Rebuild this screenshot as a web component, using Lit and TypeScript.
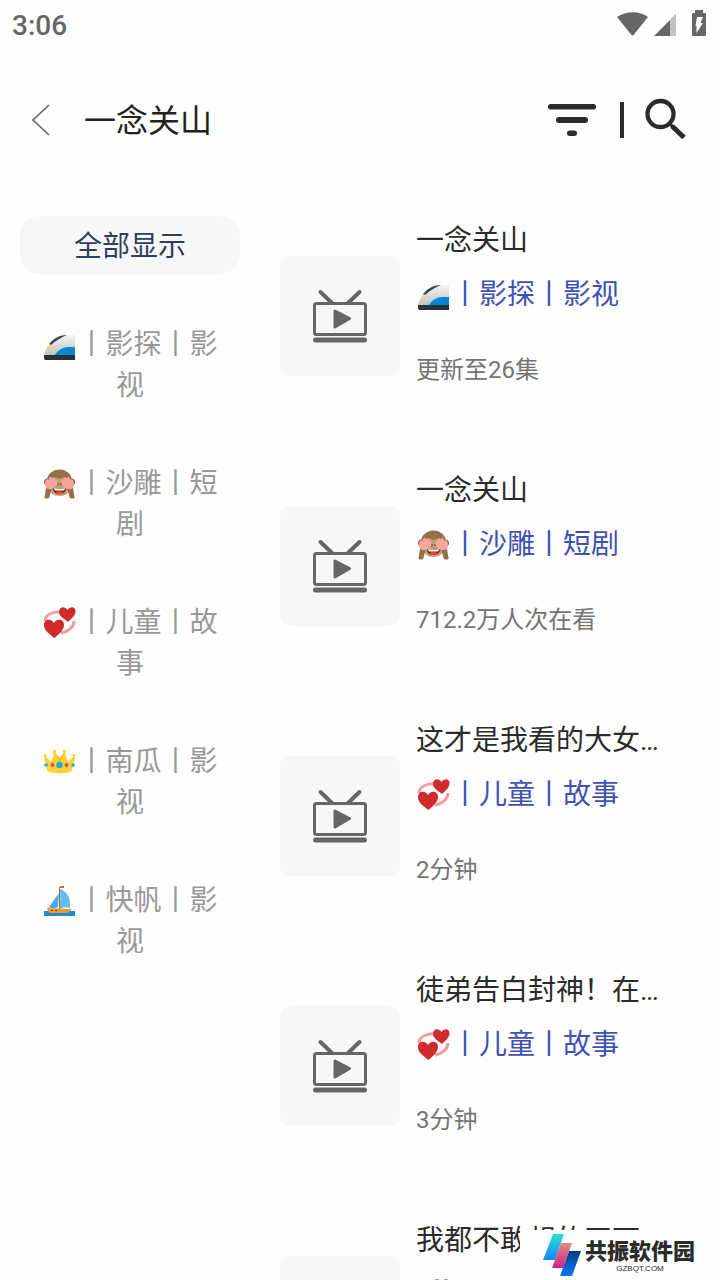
import { LitElement, html, css, svg } from "lit";
import { customElement, state } from "lit/decorators.js";

type Emoji = "train" | "monkey" | "hearts" | "crown" | "boat";

const art = {
  train: svg`
    <defs><linearGradient id="tb" x1="0" y1="0" x2="0" y2="1"><stop offset="0" stop-color="#f4f4f4"/><stop offset="1" stop-color="#bdbdbd"/></linearGradient></defs>
    <g transform="translate(0 2)">
    <path d="M1 26 C1 18 10 4 25 4 H32 V26 Z" fill="url(#tb)"/>
    <path d="M6 13 C11 7 17 4 24 4 C17 7 12 10 8 14 Z" fill="#37474f"/>
    <path d="M4 17 L8 13 L7 16 L4 19 Z" fill="#fdd835"/>
    <path d="M11 25 C15 19 20 16 26 16 H32 V25 Z" fill="#0288d1"/>
    <path d="M1 24 H32 V29 H2 Q1 28 1 27 Z" fill="#263238"/></g>`,
  monkey: svg`
    <circle cx="4.500" cy="14" r="3.500" fill="#8d6542"/><circle cx="28.500" cy="14" r="3.500" fill="#8d6542"/>
    <ellipse cx="16.500" cy="13" rx="12.500" ry="11.500" fill="#94704a"/>
    <path d="M6 18 C6 11 12 7 16.500 11 C21 7 27 11 27 18 C27 25 22 28 16.500 28 C11 28 6 25 6 18 Z" fill="#c69a6d"/>
    <path d="M10 20 Q16.500 22 23 20 C23 28 10 28 10 20 Z" fill="#4e2e24"/><path d="M10.500 20 Q16.500 22 22.500 20 L21 22.500 H12 Z" fill="#fff"/><ellipse cx="16.500" cy="24.500" rx="3.500" ry="1.400" fill="#f44336"/>
    <path d="M14.500 15.500 h1.300 v1.300 h-1.300z M17.200 15.500 h1.300 v1.300 h-1.300z" fill="#5d4037"/>
    <path d="M1.500 29 L3.500 17 L9 19 L6.500 29 C5.500 31 1 31 1.500 29 Z M31.500 29 L29.500 17 L24 19 L26.500 29 C27.500 31 32 31 31.500 29 Z" fill="#94704a"/>
    <path d="M2.500 19 C1 12 4 10 6 12 C6 8 9 8 9 11 C10 8 13 9 12 12 C15 11 15 14 13.500 17 C12 21 5 23 2.500 19 Z" fill="#f8a5a0"/>
    <path d="M30.500 19 C32 12 29 10 27 12 C27 8 24 8 24 11 C23 8 20 9 21 12 C18 11 18 14 19.500 17 C21 21 28 23 30.500 19 Z" fill="#f8a5a0"/>`,
  hearts: svg`
    <path d="M2 14 C2 8 9 5 17 4.500" fill="none" stroke="#f29a9d" stroke-width="3"/>
    <path d="M31 14 C31 20 25 25 18 26" fill="none" stroke="#f29a9d" stroke-width="3"/>
    <path d="M25 15 C20 11 16 9 16 5 C16 -1 22 -1 24.500 3 C27 -1 33 -1 32.500 5 C32 9 28 12 25 15 Z" fill="#d02a2c"/>
    <path d="M11.500 31 C5 26 1 23 1 18 C1 12 8 11 11 16 C14 11 21 12 21 18 C21 23 16 27 11.500 31 Z" fill="#d02a2c"/>`,
  crown: svg`
    <path d="M5 25 L1 11 L8 16 L12 7 L16.500 12 L21 7 L25 16 L32 11 L28 25 Z" fill="#f0a81c"/>
    <path d="M4 25 L2 10 L9 17 L11 5 L16.500 15 L22 5 L24 17 L31 10 L29 25 C22 28 11 28 4 25 Z" fill="#fdd32f"/>
    <circle cx="11.500" cy="5.500" r="1.700" fill="#fdd32f"/><circle cx="21.500" cy="5.500" r="1.700" fill="#fdd32f"/><circle cx="2" cy="9.500" r="1.400" fill="#fdd32f"/><circle cx="31" cy="9.500" r="1.400" fill="#fdd32f"/>
    <circle cx="16.500" cy="19" r="3.200" fill="#1fa9dc"/><circle cx="9.500" cy="19" r="1.900" fill="#e0407b"/><circle cx="23.500" cy="19" r="1.900" fill="#e0407b"/>
    <circle cx="3" cy="19" r="1.800" fill="#1fa9dc"/><circle cx="30" cy="19" r="1.800" fill="#1fa9dc"/>`,
  boat: svg`
    <g transform="translate(0 1)">
    <path d="M1 25 H32 V30 H1 Z" fill="#1e8bd2"/>
    <path d="M17 3 Q18 14 16 23 Q22 20 27 22 C28 12 24 5 17 3 Z" fill="#64bdf0"/>
    <path d="M16 7 L6 21 C9 23 13 22 15 21 Z" fill="#4aa8e8"/>
    <path d="M16.500 1 V23" stroke="#a36b45" stroke-width="1"/><path d="M17 0 h4 v2 h-4z" fill="#e8593a"/>
    <path d="M4 22 L29 23 L25 27 H6 Z" fill="#f09a24"/><path d="M8 24 h2 v1 h-2z M12 24 h2 v1 h-2z" fill="#5d4037"/></g>`,
};

const emoji = (name: Emoji) =>
  html`<svg class="emoji" viewBox="-1 0 35 32" aria-hidden="true">${art[name]}</svg>`;

interface Source { icon?: Emoji; label: string }
interface Result { title: string; icon: Emoji; source: string; note: string }

const sources: Source[] = [
  { label: "全部显示" },
  { icon: "train", label: "丨影探丨影视" },
  { icon: "monkey", label: "丨沙雕丨短剧" },
  { icon: "hearts", label: "丨儿童丨故事" },
  { icon: "crown", label: "丨南瓜丨影视" },
  { icon: "boat", label: "丨快帆丨影视" },
];

const results: Result[] = [
  { title: "一念关山", icon: "train", source: "丨影探丨影视", note: "更新至26集" },
  { title: "一念关山", icon: "monkey", source: "丨沙雕丨短剧", note: "712.2万人次在看" },
  { title: "这才是我看的大女主剧", icon: "hearts", source: "丨儿童丨故事", note: "2分钟" },
  { title: "徒弟告白封神！在一念关山", icon: "hearts", source: "丨儿童丨故事", note: "3分钟" },
  { title: "我都不敢想的画面", icon: "hearts", source: "丨儿童丨故事", note: "2分钟" },
];

@customElement("app-root")
export class AppRoot extends LitElement {
  @state() private selected = 0;

  static styles = css`
    :host { display: flex; flex-direction: column; height: 100vh; overflow: hidden; position: relative;
      background: #fefefe; color: #2b2b2b; font-family: Roboto, "Noto Sans CJK SC", sans-serif; }
    * { box-sizing: border-box; }
    button { border: 0; background: none; padding: 0; font: inherit; color: inherit; cursor: pointer; }
    svg { display: block; }
    .status { display: flex; align-items: center; justify-content: space-between; height: 48px; padding: 0 12px; color: #666; flex: none; }
    .clock { font-size: 28px; line-height: 32px; font-weight: 500; padding-top: 4px; }
    .status-icons { width: 92px; height: 28px; }
    .header { display: flex; align-items: center; height: 144px; padding: 0 32px; flex: none; }
    .back { width: 20px; height: 32px; }
    .heading { flex: 1; margin: 0 0 0 32px; padding-top: 2px; font-size: 32px; line-height: 48px; font-weight: 400; color: #212121; }
    .filter { width: 48px; height: 36px; }
    .rule { width: 4px; height: 36px; margin: 0 20px 0 24px; background: #2b2b2b; }
    .search { width: 44px; height: 44px; }
    .body { flex: 1; display: flex; align-items: flex-start; min-height: 0; }
    .sources { width: 260px; padding: 24px 20px; display: flex; flex-direction: column; gap: 40px; flex: none; }
    .source { padding: 10px 20px 7px; border-radius: 20px; font-size: 28px; line-height: 41px; text-align: center; color: #999; word-break: break-all; }
    .source.on { background: #f7f7f7; color: #2e3f5f; }
    .emoji { display: inline-block; width: 35px; height: 32px; vertical-align: -7px; }
    .results { flex: 1; min-width: 0; list-style: none; margin: -1px 0 0; padding: 0 60px 0 20px; }
    .result { display: flex; align-items: center; gap: 16px; height: 250px; }
    .thumb { flex: none; width: 120px; height: 120px; border-radius: 10px; background: #f7f7f7; display: grid; place-items: center; }
    .info { flex: 1; min-width: 0; height: 192px; }
    .title { margin: 0; font-size: 28px; line-height: 42px; font-weight: 400; overflow: hidden; white-space: nowrap; text-overflow: ellipsis; }
    .origin { margin: 12px 0 0; font-size: 28px; line-height: 42px; color: #3f51b5; white-space: nowrap; }
    .note { margin: 36px 0 0; font-size: 24px; line-height: 36px; color: #757575; }
    .brand { position: absolute; right: 0; bottom: 0; width: 200px; height: 50px; padding: 0 22px 0 23px; background: #fefefe; display: flex; gap: 4px; align-items: center; }
    .brand-mark { flex: none; width: 38px; height: 44px; }
    .brand-text { display: flex; flex-direction: column; align-items: center; color: #2b2b2b; white-space: nowrap; }
    .brand-name { font: 900 22px/28px "Noto Sans CJK SC", sans-serif; }
    .brand-site { font: 8px/12px "Liberation Sans", sans-serif; }
  `;

  render() {
    return html`
      <div class="status">
        <span class="clock">3:06</span>
        <svg class="status-icons" viewBox="0 0 92 28" fill="#666" aria-hidden="true">
          <path d="M1 7 C10 0.500 24 0.500 32 7 L17.500 25 Q16.500 26 15.500 25 Z"/>
          <path d="M38 26 L60 4 V26 Z"/><path d="M54 10 L59 4.500 Q60 4 60 5 V25 Q60 26 59 26 H54 Z" fill="#c2c2c2"/>
          <path d="M79 0 H87 V3 H89 Q90 3 90 4 V25 Q90 26 89 26 H77 Q76 26 76 25 V4 Q76 3 77 3 H79 Z"/>
          <path d="M81 7 H87 L84.500 13 H87 L80.500 23 V16 H79.500 Z" fill="#fff"/>
        </svg>
      </div>
      <header class="header">
        <button class="back" aria-label="返回"><svg width="20" height="32" viewBox="0 0 20 32" fill="none" stroke="#666" stroke-width="1.600"><path d="M17 1 L1 16 L17 31"/></svg></button>
        <h1 class="heading">一念关山</h1>
        <button class="filter" aria-label="筛选"><svg width="48" height="36" viewBox="0 0 48 36" fill="#2b2b2b"><rect y="2" width="48" height="5.500" rx="2.500"/><rect x="8" y="15" width="32" height="6" rx="3"/><rect x="19" y="28.500" width="10" height="5.500" rx="2.700"/></svg></button>
        <span class="rule"></span>
        <button class="search" aria-label="搜索"><svg width="44" height="44" viewBox="0 0 44 44" fill="none" stroke="#2b2b2b"><circle cx="16.500" cy="16" r="13" stroke-width="4.300"/><path d="M26 26 L29 29" stroke-width="3"/><path d="M28 28 L40 39.500" stroke-width="5"/></svg></button>
      </header>
      <main class="body">
        <nav class="sources">
          ${sources.map((s, i) => html`<button class="source ${i === this.selected ? "on" : ""}" @click=${() => (this.selected = i)}>${s.icon ? emoji(s.icon) : ""}${s.label}</button>`)}
        </nav>
        <ul class="results">
          ${results.map((r) => html`<li class="result">
            <div class="thumb"><svg width="56" height="56" viewBox="0 0 56 56" fill="none" stroke="#666" stroke-linecap="round">
              <path d="M8.500 4 L20 15 M47.500 4 L36 15" stroke-width="4"/>
              <rect x="2.500" y="15.500" width="51" height="31" rx="2" stroke-width="3"/>
              <path d="M3.500 52 H52.500" stroke-width="5"/>
              <path d="M23 23 L37.500 30.500 L23 39 Z" fill="#666" stroke-width="3" stroke-linejoin="round"/>
            </svg></div>
            <div class="info">
              <h2 class="title">${r.title}</h2>
              <p class="origin">${emoji(r.icon)}${r.source}</p>
              <p class="note">${r.note}</p>
            </div>
          </li>`)}
        </ul>
      </main>
      <aside class="brand">
        <svg class="brand-mark" viewBox="0 0 38 44" aria-hidden="true">
          <defs>
            <linearGradient id="ba" x1="0" y1="0" x2="0" y2="1"><stop stop-color="#2fe0d0"/><stop offset="1" stop-color="#1686ff"/></linearGradient>
            <linearGradient id="bb" x1="0" y1="0" x2="0" y2="1"><stop stop-color="#e58a80"/><stop offset="1" stop-color="#cb2388"/></linearGradient>
            <linearGradient id="bc" x1="0" y1="0" x2="0" y2="1"><stop stop-color="#063a82"/><stop offset="1" stop-color="#0a78fa"/></linearGradient>
          </defs>
          <path d="M10 1 H21 L12 27 H0 Z" fill="url(#ba)"/>
          <path d="M26 18 H38 L29 43 H17 Z" fill="url(#bc)"/>
          <path d="M18 10 H29 L20 35 H9 Z" fill="url(#bb)"/>
        </svg>
        <div class="brand-text"><span class="brand-name">共振软件园</span><span class="brand-site">GZBQT.COM</span></div>
      </aside>
    `;
  }
}
